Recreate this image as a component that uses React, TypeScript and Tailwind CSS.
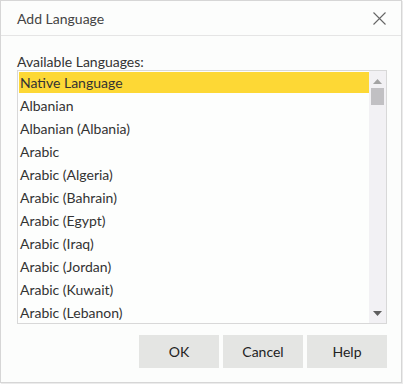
import React from "react";

const items = [
  "Native Language",
  "Albanian",
  "Albanian (Albania)",
  "Arabic",
  "Arabic (Algeria)",
  "Arabic (Bahrain)",
  "Arabic (Egypt)",
  "Arabic (Iraq)",
  "Arabic (Jordan)",
  "Arabic (Kuwait)",
  "Arabic (Lebanon)",
];

export default function App() {
  return (
    <div
      className="w-[403px] h-[384px] bg-white"
      style={{ fontFamily: "Lato, 'Open Sans', sans-serif" }}
    >
      <div className="w-[402px] h-[383px] border border-[#d6d6d6] bg-[#fcfdfc] flex flex-col shadow-[1px_1px_1px_rgba(0,0,0,0.08)]">
        <div className="h-[35px] shrink-0 border-b border-[#e5e5e5] flex items-center justify-between pl-[16px] pr-[15px]">
          <span className="text-[14px] text-[#444] leading-none mt-[1px]">Add Language</span>
          <svg width="13" height="13" viewBox="0 0 13 13" className="mt-[1px]">
            <path d="M0.5 0.5L12.5 12.5M12.5 0.5L0.5 12.5" stroke="#666" strokeWidth="1.1" />
          </svg>
        </div>
        <div className="pl-[16px] pr-[14px] pt-[17px]">
          <div className="text-[14px] text-[#333] leading-[17px] h-[17px]">Available Languages:</div>
          <div className="w-[370px] h-[254px] border border-[#d8d8d8] bg-[#fdfefd] flex">
            <div className="flex-1 pt-[1px] pl-[1px] overflow-hidden">
              {items.map((it, i) => (
                <div key={it} className="h-[23px] flex items-start">
                  <div
                    className={
                      "w-full h-[21px] flex items-center pl-[1px] pb-[1px] text-[14px] text-[#333] " +
                      (i === 0 ? "bg-[#fdd835]" : "")
                    }
                  >
                    {it}
                  </div>
                </div>
              ))}
            </div>
            <div className="w-[17px] h-full bg-[#f2f1f4] flex flex-col items-center">
              <svg width="9" height="5" viewBox="0 0 9 5" className="mt-[8px]">
                <path d="M4.5 0L9 5H0Z" fill="#a3a3a3" />
              </svg>
              <div className="mt-[4px] w-[13px] h-[17px] bg-[#c1c0c3]" />
              <div className="flex-1" />
              <svg width="9" height="5" viewBox="0 0 9 5" className="mb-[7px]">
                <path d="M0 0H9L4.5 5Z" fill="#5f5f5f" />
              </svg>
            </div>
          </div>
          <div className="mt-[11px] flex justify-end gap-[4px] pr-0">
            {["OK", "Cancel", "Help"].map((b) => (
              <div
                key={b}
                className="w-[80px] h-[33px] bg-[#e4e5e3] flex items-center justify-center text-[14px] text-[#222]"
              >
                {b}
              </div>
            ))}
          </div>
        </div>
      </div>
    </div>
  );
}
